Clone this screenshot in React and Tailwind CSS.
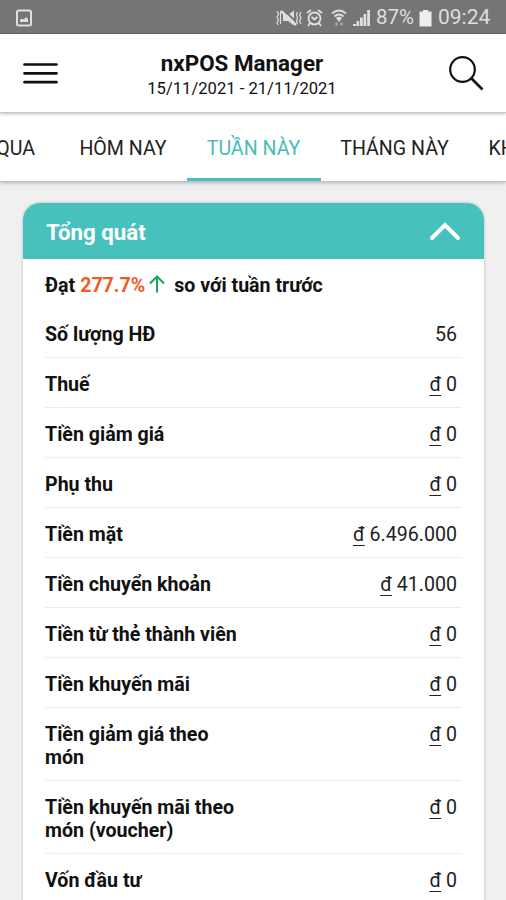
import React, { useState } from 'react';

const tabs = [
  { id: 'yesterday', label: 'HÔM QUA', width: 'w-[130px] pr-[7px]' },
  { id: 'today', label: 'HÔM NAY', width: 'w-[127px]' },
  { id: 'week', label: 'TUẦN NÀY', width: 'w-[134px]' },
  { id: 'month', label: 'THÁNG NÀY', width: 'w-[148px]' },
  { id: 'other', label: 'KHÁC', width: 'w-[88px] pl-[4px]' },
];

const rows = [
  { label: 'Số lượng HĐ', value: '56', plain: true },
  { label: 'Thuế', value: '0' },
  { label: 'Tiền giảm giá', value: '0' },
  { label: 'Phụ thu', value: '0' },
  { label: 'Tiền mặt', value: '6.496.000' },
  { label: 'Tiền chuyển khoản', value: '41.000' },
  { label: 'Tiền từ thẻ thành viên', value: '0' },
  { label: 'Tiền khuyến mãi', value: '0' },
  { label: 'Tiền giảm giá theo món', value: '0' },
  { label: 'Tiền khuyến mãi theo món (voucher)', value: '0' },
  { label: 'Vốn đầu tư', value: '0' },
];

function StatusBar() {
  return (
    <div className="flex h-[34px] shrink-0 items-center border-b border-[#666] bg-[#757575] pl-4 pr-[15px] pt-[2px] text-[#dedede]">
      <svg width="16" height="18" viewBox="0 0 16 18" fill="none" stroke="currentColor" strokeWidth="2">
        <rect x="1" y="1.5" width="14" height="15" rx="1.5" />
        <path d="M4 13v-2l2-1.500 2 1L10 8l2 2v3z" fill="currentColor" stroke="none" />
      </svg>
      <svg className="ml-auto" width="26" height="18" viewBox="0 0 26 18" fill="none" stroke="currentColor" strokeWidth="1.2">
        <path d="M7 6h5l6-4.500v15L12 12H7z" fill="currentColor" stroke="none" />
        <path d="M7.500 1l14 13" stroke="#757575" strokeWidth="1.8" />
        <path d="M5 2l15 14" strokeWidth="2.4" />
        <path d="M1 2l1.500 3L1 8l1.500 3L1 14l1 2M4.500 2v13M21.500 3l-1 3 1 3-1 3 1 3M25 3l-1.500 3L25 9l-1.500 3L25 15" />
      </svg>
      <svg className="ml-[4px]" width="17" height="18" viewBox="0 0 17 18" fill="none" stroke="currentColor" strokeWidth="1.8">
        <circle cx="8.5" cy="9.5" r="6" />
        <path d="M1 4l4-3M16 4l-4-3M4 14l-2 3M13 14l2 3M5.500 8l3 2.500 3-2.500" />
      </svg>
      <svg className="ml-[8px]" width="16" height="18" viewBox="0 0 16 18" fill="none" stroke="currentColor" strokeWidth="1.8">
        <path d="M1 4.500q7-6 14 0M3.500 7.500q4.500-4 9 0" />
        <path d="M5 9q3-2.500 6 0L8 13z" fill="currentColor" stroke="none" />
        <path d="M5.500 13.500v3M10.500 13.500v3" strokeWidth="2" opacity="0.6" />
      </svg>
      <svg className="ml-[6px]" width="18" height="18" viewBox="0 0 18 18" fill="currentColor">
        <path d="M0 17v-2h3v2zM3.500 17v-5h2.800v5zM7 17V8.500h2.800V17zM10.500 17V5h2.800v12zM14.200 17V1H17v16z" />
      </svg>
      <span className="ml-[5px] w-[41px] whitespace-nowrap text-[20.5px]">87%</span>
      <svg className="ml-[2px]" width="13" height="18" viewBox="0 0 13 18" fill="#eee">
        <path d="M4 1h5v1.500h3.500v15h-12v-15H4z" />
      </svg>
      <span className="ml-[6px] w-[53px] whitespace-nowrap text-[21px]">09:24</span>
    </div>
  );
}

function Header() {
  return (
    <header className="relative z-20 flex h-[79px] shrink-0 items-center border-b border-[#c6c6c6] bg-white pl-[23px] pr-[22px] shadow-[0_1px_3px_rgba(0,0,0,0.25)]">
      <button aria-label="Menu">
        <svg width="36" height="24" viewBox="0 0 36 24" stroke="#111" strokeWidth="2.7" strokeLinecap="round">
          <path d="M1.500 3.500h32M1.500 12.300h32M1.500 21.200h32" />
        </svg>
      </button>
      <div className="flex-1 pr-[23px] pt-[5px] text-center">
        <h1 className="text-[22.4px] font-bold leading-[26px]">nxPOS Manager</h1>
        <p className="text-[16.6px] leading-[26px]">15/11/2021 - 21/11/2021</p>
      </div>
      <button aria-label="Tìm kiếm">
        <svg width="36" height="36" viewBox="0 0 36 36" fill="none" stroke="#111" strokeWidth="2.2">
          <circle cx="14.5" cy="14.5" r="12.3" />
          <path d="M23 23l11.500 11.500" strokeWidth="2.6" />
        </svg>
      </button>
    </header>
  );
}

function Tabs({ active, onChange }) {
  return (
    <nav className="relative z-10 flex h-[69px] shrink-0 justify-center border-b border-[#c2c2c2] bg-white shadow-[0_1px_4px_rgba(0,0,0,0.25)]">
      <div className="-ml-[20px] flex shrink-0">
        {tabs.map((tab) => (
          <button
            key={tab.id}
            onClick={() => onChange(tab.id)}
            className={`${tab.width} shrink-0 whitespace-nowrap border-b-[3px] pt-[6px] text-center text-[19.6px] ${
              active === tab.id ? 'border-[#45c1bd] text-[#45bdb5]' : 'border-transparent text-[#222]'
            }`}
          >
            {tab.label}
          </button>
        ))}
      </div>
    </nav>
  );
}

function Row({ row }) {
  return (
    <div className="mr-[22px] flex justify-between border-b border-[#ececec] pb-[11px] pr-[5px] pt-[15px] leading-[23px] last:border-b-0">
      <span className="max-w-[200px] font-bold">{row.label}</span>
      <span className="whitespace-nowrap text-[#222]">
        {!row.plain && <span className="underline decoration-1 underline-offset-4">đ</span>}
        {!row.plain && ' '}
        {row.value}
      </span>
    </div>
  );
}

function App() {
  const [active, setActive] = useState('week');
  const [open, setOpen] = useState(true);

  return (
    <div className="flex h-[900px] w-[506px] flex-col overflow-hidden bg-[#f0f0f0] font-[Roboto,sans-serif] text-[#111]">
      <StatusBar />
      <Header />
      <Tabs active={active} onChange={setActive} />
      <section className="ml-[23px] mt-[21px] h-[760px] w-[461px] shrink-0 overflow-hidden rounded-t-[17px] bg-white shadow-[0_0_3px_rgba(0,0,0,0.25)]">
        <button
          onClick={() => setOpen(!open)}
          className="flex h-[56px] w-full items-center justify-between bg-[#46c1bd] pl-[23px] pr-[23px] text-white"
        >
          <span className="pt-[4px] text-[22.3px] font-bold">Tổng quát</span>
          <svg width="32" height="20" viewBox="0 0 32 20" fill="none" stroke="currentColor" strokeWidth="4">
            <path d="M3 17L16 4l13 13" strokeLinecap="round" />
          </svg>
        </button>
        {open && (
          <div className="pl-[22px] text-[19.6px]">
            <p className="flex h-[49px] items-center whitespace-nowrap pt-[4px] font-bold">
              <span>Đạt</span>
              <span className="ml-[5px] text-[#f15a24]">277.7%</span>
              <svg className="-mt-[4px] ml-[4px] mr-[9px]" width="16" height="18" viewBox="0 0 16 18" fill="none" stroke="#18a65b" strokeWidth="2">
                <path d="M8 17.500V2M1 8.500L8 1.500l7 7" />
              </svg>
              <span>so với tuần trước</span>
            </p>
            {rows.map((row) => (
              <Row key={row.label} row={row} />
            ))}
          </div>
        )}
      </section>
    </div>
  );
}

export default App;
